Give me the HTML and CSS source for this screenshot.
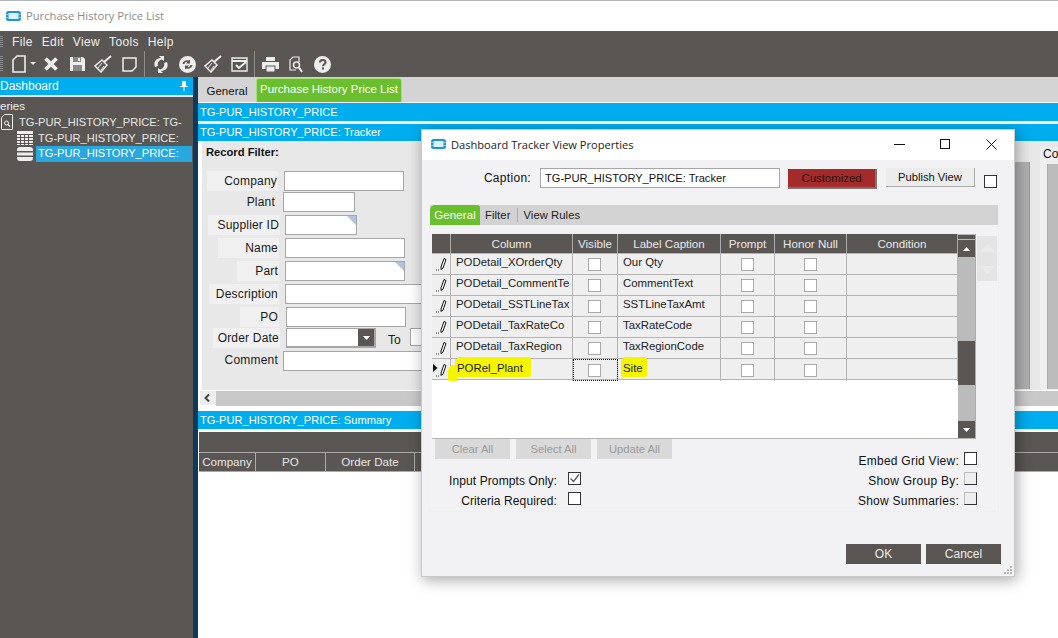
FILE: index.html
```html
<!DOCTYPE html>
<html lang="en">
<head>
<meta charset="utf-8">
<title>Purchase History Price List</title>
<link rel="stylesheet" href="styles.css">
</head>
<body>
<div class="app">
  <header class="titlebar">
    <svg class="appicon" viewBox="0 0 15 12"><rect x="0" y="1" width="15" height="10" rx="2.500" fill="#1d93d2"/><rect x="2.500" y="3" width="10" height="6" fill="#dcf0fa"/><rect x="0" y="4" width="2" height="1" fill="#8fd2f2"/><rect x="0" y="7" width="2" height="1" fill="#8fd2f2"/><rect x="13" y="4" width="2" height="1" fill="#8fd2f2"/><rect x="13" y="7" width="2" height="1" fill="#8fd2f2"/></svg>
    <span class="titlebar-text">Purchase History Price List</span>
  </header>
  <nav class="menubar">
    <span class="grip"></span>
    <span>File</span><span>Edit</span><span>View</span><span>Tools</span><span>Help</span>
  </nav>
  <div class="toolbar">
    <span class="grip grip-tool"></span>
    <span class="newdoc">
      <svg width="14" height="18" viewBox="0 0 14 18"><path d="M5 1H13V17H1V5Z" fill="none" stroke="#eee" stroke-width="1.600"/></svg>
      <svg width="6" height="3" viewBox="0 0 6 3"><path d="M0 0H6L3 3Z" fill="#eee"/></svg>
    </span>
    <span class="slot"><svg width="16" height="16" viewBox="0 0 16 16"><path d="M2.500 2.500L13.500 13.500M13.500 2.500L2.500 13.500" stroke="#eee" stroke-width="3.800"/></svg></span>
    <span class="slot"><svg width="17" height="16" viewBox="0 0 17 16"><path d="M1 1H14L16 3V15H1Z" fill="#eee"/><rect x="4" y="1" width="8" height="5" fill="#8a8886"/><rect x="9" y="2" width="2" height="3" fill="#eee"/><rect x="4" y="9" width="9" height="6" fill="#8a8886"/></svg></span>
    <span class="slot"><svg width="18" height="18" viewBox="0 0 18 18"><path d="M17 1L10 7" stroke="#eee" stroke-width="2"/><path d="M8 5L13 10L7 17L1 11Z" fill="none" stroke="#eee" stroke-width="1.500"/><path d="M4 13L8 8M7 15L10 11" stroke="#eee"/></svg></span>
    <span class="slot"><svg width="15" height="15" viewBox="0 0 15 15"><path d="M1 1H14V10L10 14H1Z" fill="none" stroke="#eee" stroke-width="1.500"/></svg></span>
    <span class="sep sep-a"></span>
    <span class="slot"><svg width="16" height="17" viewBox="0 0 16 17"><path d="M2 11C0 6 3 2 8 2L6 0H11V5L9 3.500C6 4 4 7 5 10Z" fill="#eee"/><path d="M14 6C16 11 13 15 8 15L10 17H5V12L7 13.500C10 13 12 10 11 7Z" fill="#eee"/></svg></span>
    <span class="slot"><svg width="17" height="17" viewBox="0 0 17 17"><circle cx="8.500" cy="8.500" r="8.500" fill="#eee"/><path d="M3.500 8C4 5 7 3.500 10 4.500L11 3.500V7.500H7L8.500 6C7 5.500 6 6.500 5.500 8ZM13.500 9C13 12 10 13.500 7 12.500L6 13.500V9.500H10L8.500 11C10 11.500 11 10.500 11.500 9Z" fill="#595653"/></svg></span>
    <span class="slot"><svg width="18" height="18" viewBox="0 0 18 18"><path d="M17 1L10 7" stroke="#eee" stroke-width="2"/><path d="M8 5L13 10L7 17L1 11Z" fill="none" stroke="#eee" stroke-width="1.500"/><path d="M4 13L8 8M7 15L10 11" stroke="#eee"/></svg></span>
    <span class="slot"><svg width="17" height="15" viewBox="0 0 17 15"><path d="M1 1H16V14H1Z" fill="none" stroke="#eee" stroke-width="1.400"/><path d="M1 4H16" stroke="#eee" stroke-width="2"/><path d="M5 8L8 11L15 5" fill="none" stroke="#eee" stroke-width="2"/></svg></span>
    <span class="sep sep-b"></span>
    <span class="slot"><svg width="17" height="15" viewBox="0 0 17 15"><rect x="4" y="0" width="9" height="4" fill="#eee"/><rect x="0" y="5" width="17" height="7" fill="#eee"/><rect x="4" y="9" width="9" height="6" fill="#eee" stroke="#595653"/></svg></span>
    <span class="slot"><svg width="14" height="17" viewBox="0 0 14 17"><path d="M4 1H10V6M4 1L1 4V14H7" fill="none" stroke="#eee" stroke-width="1.200"/><circle cx="7.500" cy="9" r="3" fill="none" stroke="#eee" stroke-width="1.500"/><path d="M10 11.500L13 16" stroke="#eee" stroke-width="2"/></svg></span>
    <span class="slot"><svg width="17" height="17" viewBox="0 0 17 17"><circle cx="8.500" cy="8.500" r="8.500" fill="#eee"/><path d="M5.800 6.500C6 4.800 7.200 4 8.700 4C10.300 4 11.500 5 11.500 6.400C11.500 8.300 9 8.300 9 10.200" fill="none" stroke="#595653" stroke-width="2"/><rect x="8" y="11.500" width="2" height="2" fill="#595653"/></svg></span>
  </div>
  <main class="workspace">
    <aside class="sidebar">
      <div class="side-head"><span>Dashboard</span>
        <svg width="8" height="10" viewBox="0 0 8 10"><path d="M2 0H6V5H8V6H4.500V10H3.500V6H0V5H2Z" fill="#fff"/></svg>
      </div>
      <div class="tree-root">eries</div>
      <div class="tree-row tree-l1">
        <svg width="12" height="16" viewBox="0 0 12 16"><path d="M3.500 0.500H11.500V15.500H0.500V3.500Z" fill="none" stroke="#eee"/><circle cx="5.500" cy="9" r="2" fill="none" stroke="#eee"/><path d="M7 10.500L9 12.500" stroke="#eee" stroke-width="1.200"/></svg>
        <span>TG-PUR_HISTORY_PRICE: TG-</span>
      </div>
      <div class="tree-row tree-l2">
        <svg width="16" height="14" viewBox="0 0 16 14"><path d="M0 0H16V14H0Z" fill="#eee"/><path d="M0 3.500H16M0 6.500H16M0 9.500H16M0 12.500H16M3.500 3V14M7.500 3V14M11.500 3V14" stroke="#595653" stroke-width="1"/></svg>
        <span>TG-PUR_HISTORY_PRICE:</span>
      </div>
      <div class="tree-row tree-l3">
        <svg width="16" height="14" viewBox="0 0 16 14"><path d="M3 0H13A3 3 0 0 1 16 3V4H0V3A3 3 0 0 1 3 0ZM0 5.500H16V8.500H0ZM0 10H16V11A3 3 0 0 1 13 14H3A3 3 0 0 1 0 11Z" fill="#eee"/></svg>
        <span class="tree-sel">TG-PUR_HISTORY_PRICE:</span>
      </div>
    </aside>
    <div class="splitter"></div>
    <section class="content">
      <div class="tabs">
        <span class="tab">General</span>
        <span class="tab tab-on">Purchase History Price List</span>
      </div>
      <div class="bluebar">TG-PUR_HISTORY_PRICE</div>
      <div class="bluebar bluebar-b">TG-PUR_HISTORY_PRICE: Tracker</div>
      <div class="tracker">
        <div class="filter">
          <div class="filter-title">Record Filter:</div>
          <div class="frow f-company"><label class="shade">Company</label><span class="inp"></span></div>
          <div class="frow f-plant"><label>Plant</label><span class="inp"></span></div>
          <div class="frow f-supplier"><label class="shade">Supplier ID</label><span class="inp corner"></span></div>
          <div class="frow f-name"><label class="shade">Name</label><span class="inp"></span></div>
          <div class="frow f-part"><label class="shade">Part</label><span class="inp corner"></span></div>
          <div class="frow f-desc"><label class="shade">Description</label><span class="inp"></span></div>
          <div class="frow f-po"><label class="shade">PO</label><span class="inp"></span></div>
          <div class="frow f-date"><label class="shade">Order Date</label><span class="inp combo"><i class="combo-btn"><svg width="7" height="4" viewBox="0 0 7 4"><path d="M0 0H7L3.500 4Z" fill="#fff"/></svg></i></span><span class="to">To</span><span class="inp"></span></div>
          <div class="frow f-comment"><label>Comment</label><span class="inp"></span></div>
        </div>
        <div class="far">
          <div class="far-col"></div>
          <div class="far-panel"><span>Co</span><div class="far-inner"></div></div>
        </div>
      </div>
      <div class="hscroll"><svg width="6" height="8" viewBox="0 0 6 8"><path d="M5 0.500L1.500 4L5 7.500" fill="none" stroke="#444" stroke-width="2"/></svg><span class="hscroll-track"></span></div>
      <div class="bluebar bluebar-c">TG-PUR_HISTORY_PRICE: Summary</div>
      <div class="groupbar"></div>
      <div class="sumhead"><span class="c1">Company</span><span class="c2">PO</span><span class="c3">Order Date</span><span class="c4"></span></div>
    </section>
  </main>
</div>

<div class="dialog">
  <div class="dlg-title">
    <svg class="appicon" viewBox="0 0 15 12"><rect x="0" y="1" width="15" height="10" rx="2.500" fill="#1d93d2"/><rect x="2.500" y="3" width="10" height="6" fill="#dcf0fa"/><rect x="0" y="4" width="2" height="1" fill="#8fd2f2"/><rect x="0" y="7" width="2" height="1" fill="#8fd2f2"/><rect x="13" y="4" width="2" height="1" fill="#8fd2f2"/><rect x="13" y="7" width="2" height="1" fill="#8fd2f2"/></svg>
    <span class="dlg-name">Dashboard Tracker View Properties</span>
    <span class="winbtn"><svg width="11" height="11" viewBox="0 0 11 11"><path d="M0 5.500H11" stroke="#111"/></svg></span>
    <span class="winbtn"><svg width="11" height="11" viewBox="0 0 11 11"><rect x="0.500" y="0.500" width="9" height="9" fill="none" stroke="#111"/></svg></span>
    <span class="winbtn"><svg width="11" height="11" viewBox="0 0 11 11"><path d="M0.500 0.500L10.500 10.500M10.500 0.500L0.500 10.500" stroke="#111"/></svg></span>
  </div>
  <div class="dlg-caption">
    <label>Caption:</label>
    <span class="cap-input">TG-PUR_HISTORY_PRICE: Tracker</span>
    <span class="btn-custom">Customized</span>
    <span class="btn-pub">Publish View</span>
    <span class="box box-dark box-pub"></span>
  </div>
  <div class="dlg-group">
    <div class="dtabs"><span class="dtab-on">General</span><span class="dtab">Filter</span><span class="dtab dtab-last">View Rules</span></div>
    <div class="gridwrap">
      <div class="grid">
        <div class="rows">
          <div class="row row-head"><span></span><span>Column</span><span>Visible</span><span>Label Caption</span><span>Prompt</span><span>Honor Null</span><span>Condition</span></div>
          <div class="row"><span class="pen"><svg width="11" height="14" viewBox="0 0 11 14"><path d="M5 10L8 1.500L10 2.500L7 11L5 12.500Z" fill="#fff" stroke="#111"/><path d="M0 13H1M2 13H3" stroke="#333"/></svg></span><span class="txt">PODetail_XOrderQty</span><span class="mid"><i class="box"></i></span><span class="txt">Our Qty</span><span class="mid"><i class="box"></i></span><span class="mid"><i class="box"></i></span><span></span></div>
          <div class="row"><span class="pen"><svg width="11" height="14" viewBox="0 0 11 14"><path d="M5 10L8 1.500L10 2.500L7 11L5 12.500Z" fill="#fff" stroke="#111"/><path d="M0 13H1M2 13H3" stroke="#333"/></svg></span><span class="txt">PODetail_CommentTe</span><span class="mid"><i class="box"></i></span><span class="txt">CommentText</span><span class="mid"><i class="box"></i></span><span class="mid"><i class="box"></i></span><span></span></div>
          <div class="row"><span class="pen"><svg width="11" height="14" viewBox="0 0 11 14"><path d="M5 10L8 1.500L10 2.500L7 11L5 12.500Z" fill="#fff" stroke="#111"/><path d="M0 13H1M2 13H3" stroke="#333"/></svg></span><span class="txt">PODetail_SSTLineTax</span><span class="mid"><i class="box"></i></span><span class="txt">SSTLineTaxAmt</span><span class="mid"><i class="box"></i></span><span class="mid"><i class="box"></i></span><span></span></div>
          <div class="row"><span class="pen"><svg width="11" height="14" viewBox="0 0 11 14"><path d="M5 10L8 1.500L10 2.500L7 11L5 12.500Z" fill="#fff" stroke="#111"/><path d="M0 13H1M2 13H3" stroke="#333"/></svg></span><span class="txt">PODetail_TaxRateCo</span><span class="mid"><i class="box"></i></span><span class="txt">TaxRateCode</span><span class="mid"><i class="box"></i></span><span class="mid"><i class="box"></i></span><span></span></div>
          <div class="row"><span class="pen"><svg width="11" height="14" viewBox="0 0 11 14"><path d="M5 10L8 1.500L10 2.500L7 11L5 12.500Z" fill="#fff" stroke="#111"/><path d="M0 13H1M2 13H3" stroke="#333"/></svg></span><span class="txt">PODetail_TaxRegion</span><span class="mid"><i class="box"></i></span><span class="txt">TaxRegionCode</span><span class="mid"><i class="box"></i></span><span class="mid"><i class="box"></i></span><span></span></div>
          <div class="row"><span class="pen pen-last"><svg width="15" height="14" viewBox="0 0 15 14"><path d="M0 1L4.500 5L0 9Z" fill="#111"/><path d="M8 10L11 1.500L13 2.500L10 11L8 12.500Z" fill="#fff" stroke="#111"/><path d="M3 13H4M5 13H6" stroke="#333"/></svg></span><span class="txt"><b class="mark mark-a">PORel_Plant</b></span><span class="mid focus"><i class="box"></i></span><span class="txt"><b class="mark">Site</b></span><span class="mid"><i class="box"></i></span><span class="mid"><i class="box"></i></span><span></span></div>
        </div>
        <div class="vscroll">
          <span class="vs-cap"></span>
          <span class="vs-btn"><svg width="7" height="4" viewBox="0 0 7 4"><path d="M0 4H7L3.500 0Z" fill="#fff"/></svg></span>
          <span class="vs-thumb"></span>
          <span class="vs-btn"><svg width="7" height="4" viewBox="0 0 7 4"><path d="M0 0H7L3.500 4Z" fill="#fff"/></svg></span>
        </div>
      </div>
      <div class="updown">
        <svg width="15" height="8" viewBox="0 0 15 8"><path d="M0 8H15L7.500 0Z" fill="#eaeaea"/></svg>
        <svg width="15" height="8" viewBox="0 0 15 8"><path d="M0 0H15L7.500 8Z" fill="#eaeaea"/></svg>
      </div>
    </div>
    <div class="lower">
      <div class="lower-left">
        <div class="bulk"><span>Clear All</span><span>Select All</span><span>Update All</span></div>
        <div class="opts">
          <div class="opt"><label>Input Prompts Only:</label><span class="box box-dark"><svg width="11" height="11" viewBox="0 0 11 11"><path d="M1.500 5.500L4.500 8.500L10 1.500" fill="none" stroke="#555" stroke-width="1.300"/></svg></span></div>
          <div class="opt"><label>Criteria Required:</label><span class="box box-dark"></span></div>
        </div>
      </div>
      <div class="opts opts-r">
        <div class="opt"><label>Embed Grid View:</label><span class="box box-dark"></span></div>
        <div class="opt"><label>Show Group By:</label><span class="box box-off"></span></div>
        <div class="opt"><label>Show Summaries:</label><span class="box box-off"></span></div>
      </div>
    </div>
  </div>
  <div class="dlg-foot"><span>OK</span><span>Cancel</span></div>
  <svg class="sizegrip" width="9" height="9" viewBox="0 0 9 9"><path d="M6 0H8V2H6ZM3 3H5V5H3ZM6 3H8V5H6ZM0 6H2V8H0ZM3 6H5V8H3ZM6 6H8V8H6Z" fill="#bbb"/></svg>
</div>
</body>
</html>
```

FILE: styles.css
```css
* { box-sizing: border-box; }
html, body { margin: 0; height: 100%; overflow: hidden; }
body { background: #fff; font: 12px "Liberation Sans", Arial, sans-serif; color: #111; position: relative; }
.app { width: 1058px; height: 638px; display: flex; flex-direction: column; }

.titlebar { height: 31px; flex: none; border-top: 1px solid #b5b5b5; background: #fff; display: flex; align-items: center; padding: 0 0 1px 6px; }
.appicon { width: 15px; height: 12px; flex: none; }
.titlebar-text { margin-left: 5px; font-family: "Open Sans", sans-serif; font-size: 11.2px; color: #8a8a8a; }

.menubar { height: 20px; flex: none; background: #595653; color: #f0f0f0; display: flex; align-items: center; gap: 9px; padding-top: 2px; letter-spacing: .35px; }
.menubar .grip { height: 12px; }
.grip { width: 3px; background: repeating-linear-gradient(#8a8a8a 0 1px, #595653 1px 2px); flex: none; }
.toolbar { height: 26px; flex: none; background: #595653; display: flex; align-items: center; }
.grip-tool { height: 16px; margin-right: 9px; }
.newdoc { width: 26px; display: flex; align-items: center; gap: 4px; }
.newdoc svg:last-child { margin-bottom: 2px; }
.slot { width: 26px; height: 26px; display: flex; align-items: center; justify-content: center; flex: none; }
.slot svg, .newdoc svg { display: block; }
.sep { width: 1px; height: 26px; background: #8f8d8a; flex: none; }
.sep-a { margin: 0 3px 0 2px; }
.sep-b { margin: 0 2px 0 2px; }

.workspace { flex: 1; display: flex; min-height: 0; }
.sidebar { width: 193px; flex: none; background: #595653; color: #eee; overflow: hidden; }
.side-head { height: 18px; background: #00adee; color: #fff; display: flex; align-items: center; justify-content: space-between; padding: 0 5px 0 0; box-shadow: 0 2px 0 #e8e8e8; }
.tree-root { margin-top: 3px; padding-top: 2px; height: 16px; color: #eee; font-size: 11.5px; }
.tree-row { height: 16px; display: flex; align-items: center; white-space: nowrap; color: #e8e8e8; font-size: 11.1px; }
.tree-row svg { flex: none; display: block; }
.tree-l1 { padding-left: 1px; gap: 6px; }
.tree-l2 { padding-left: 17px; gap: 5px; }
.tree-l3 { padding-left: 17px; padding-right: 1px; gap: 3px; }
.tree-sel { background: #29a7df; flex: 1; height: 16px; line-height: 15px; padding-left: 2px; color: #fff; }

.splitter { width: 5px; flex: none; background: #0d3a5a; }
.content { flex: 1; min-width: 0; display: flex; flex-direction: column; background: #fff; }
.tabs { height: 26px; flex: none; background: #d4d4d4; display: flex; padding-top: 1px; border-bottom: 1px solid #fff; }
.tab { width: 58px; text-align: center; line-height: 26px; color: #111; font-size: 11.5px; }
.tab-on { width: 146px; height: 24px; line-height: 21px; background: #6abf2e; color: #fff; border: 1px solid #a8dc7e; border-bottom: 0; border-radius: 3px 3px 0 0; white-space: nowrap; font-size: 11.5px; }
.bluebar { height: 18px; line-height: 18px; flex: none; background: #00adee; color: #fff; padding-left: 2px; font-size: 11.1px; }
.bluebar-b { margin-top: 3px; height: 17px; line-height: 16px; }
.bluebar-c { margin-top: 6px; }
.tracker { height: 249px; flex: none; display: flex; background: #fff; }
.filter { width: 813px; margin-left: 4px; background: #e8e8e8; padding-top: 5px; flex: none; }
.filter-title { font-weight: bold; height: 19px; color: #111; padding-left: 4px; font-size: 11.2px; }
.frow { display: flex; align-items: stretch; white-space: nowrap; height: 20px; color: #1a1a1a; }
.frow label { text-align: right; line-height: 21px; height: 20px; padding-right: 1px; flex: none; letter-spacing: .2px; }
.shade { background: #f0f0f0; }
.inp { display: block; flex: none; position: relative; height: 20px; background: #fff; border: 1px solid #a6a6a6; }
.corner::after { content: ""; position: absolute; right: 0; top: 0; border-style: solid; border-width: 0 9px 9px 0; border-color: transparent #b0c4de transparent transparent; }
.f-company { margin-top: 6px; }
.f-company label { width: 71px; margin-left: 5px; margin-right: 6px; }
.f-company .inp { width: 120px; }
.f-plant { margin-top: 1px; }
.f-plant label { width: 73px; margin-left: 3px; margin-right: 5px; padding-right: 3px; }
.f-plant .inp { width: 72px; }
.f-supplier { margin-top: 3px; }
.f-supplier label { width: 72px; margin-left: 6px; margin-right: 5px; }
.f-supplier .inp { width: 72px; }
.f-name { margin-top: 3px; }
.f-name label { width: 61px; margin-left: 16px; margin-right: 6px; }
.f-name .inp { width: 120px; }
.f-part { margin-top: 3px; }
.f-part label { width: 42px; margin-left: 35px; margin-right: 6px; }
.f-part .inp { width: 120px; }
.f-desc { margin-top: 3px; }
.f-desc label { width: 70px; margin-left: 7px; margin-right: 6px; }
.f-desc .inp { width: 200px; }
.f-po { margin-top: 3px; }
.f-po label { width: 39px; margin-left: 38px; margin-right: 7px; }
.f-po .inp { width: 120px; }
.f-date { margin-top: 1px; }
.f-date label { width: 67px; margin-left: 11px; margin-right: 6px; }
.f-date .combo { width: 90px; border-width: 1px 2px 2px 1px; }
.combo-btn { position: absolute; right: 0; top: 0; bottom: 0; width: 16px; background: #595653; display: flex; align-items: center; justify-content: center; }
.to { margin: 5px 9px 0 12px; color: #1a1a1a; }
.f-date .inp:last-child { width: 80px; height: 18px; }
.f-comment { margin-top: 3px; }
.f-comment label { width: 73px; margin-left: 3px; margin-right: 5px; padding-right: 0; line-height: 18px; }
.f-comment .inp { width: 200px; }
.far { flex: 1; min-width: 0; display: flex; background: #e8e8e8; }
.far-col { width: 15px; background: #b0b0b0; margin: 21px 0 1px; flex: none; border-right: 1px solid #999; }
.far-panel { flex: 1; margin-left: 10px; margin-top: 6px; background: #eee; padding-left: 3px; overflow: hidden; }
.far-panel span { display: block; height: 17px; line-height: 14px; }
.far-inner { margin-left: 4px; height: 225px; background: #bcbcbc; border-left: 1px solid #aaa; }
.hscroll { height: 15px; flex: none; background: #eee; display: flex; align-items: center; padding-left: 4px; border-top: 1px solid #fff; margin-left: 2px; }
.hscroll-track { flex: 1; height: 15px; background: #c8c8c8; margin-left: 6px; }
.groupbar { height: 20px; flex: none; margin-top: 3px; background: #595653; margin-left: 1px; }
.sumhead { height: 20px; flex: none; display: flex; background: #595653; color: #e8e8e8; margin-left: 1px; border-top: 1px solid #aaa; border-bottom: 1px solid #aaa; line-height: 18px; text-align: center; font-size: 11.6px; }
.sumhead span { border-right: 1px solid #aaa; flex: none; }
.c1 { width: 57px; }
.c2 { width: 70px; }
.c3 { width: 89px; }
.c4 { flex: 1 !important; border-right: 0 !important; }

.dialog { position: absolute; left: 421px; top: 129px; width: 594px; height: 448px; background: #f2f2f5; border: 1px solid #c8c8c8; box-shadow: 2px 3px 14px rgba(0,0,0,.35); color: #111; }
.dlg-title { height: 30px; background: #fff; display: flex; align-items: center; padding: 0 0 2px 9px; }
.dlg-name { margin-left: 5px; font-family: "Open Sans", sans-serif; font-size: 11.1px; flex: 1; color: #222; }
.winbtn { width: 46px; display: flex; justify-content: center; }
.winbtn svg { display: block; }
.dlg-caption { height: 45px; display: flex; padding-top: 8px; }
.dlg-caption label { width: 109px; margin-right: 9px; text-align: right; line-height: 21px; flex: none; letter-spacing: .3px; }
.cap-input { width: 240px; height: 20px; background: #fff; border: 1px solid #a6a6a6; line-height: 18px; padding-left: 4px; flex: none; font-size: 11.1px; }
.btn-custom { width: 89px; height: 20px; margin: 1px 0 0 8px; background: #a52a2a; color: #2a1010; border-right: 2px solid #777; border-bottom: 2px solid #777; text-align: center; line-height: 18px; flex: none; font-size: 11.4px; }
.btn-pub { width: 89px; height: 19px; margin-left: 9px; background: #ececec; border-right: 1px solid #aaa; border-bottom: 1px solid #aaa; text-align: center; line-height: 18px; flex: none; font-size: 11.2px; }
.box { width: 13px; height: 13px; display: block; background: #fff; border: 1px solid #aaa; flex: none; }
.box-dark { border-color: #333; }
.box-off { background: #eee; border-color: #bbb #333 #333 #bbb; }
.box-pub { margin: 7px 0 0 9px; }
.box svg { display: block; }
.dlg-group { margin-left: 8px; width: 568px; height: 306px; outline: 1px solid #efeff0; }
.dtabs { height: 20px; background: #d2d2d2; display: flex; align-items: center; font-size: 11.2px; letter-spacing: .1px; }
.dtab-on { width: 50px; height: 20px; line-height: 20px; text-align: center; background: #6abf2e; color: #fff; border-radius: 5px 3px 0 0; font-size: 11.5px; }
.dtab { padding: 0 7px 0 5px; line-height: 14px; color: #222; }
.dtab:nth-child(2) { padding-left: 5px; }
.dtab-last { border-left: 1px solid #aaa; padding-left: 5px; }
.gridwrap { display: flex; margin-top: 9px; }
.grid { width: 544px; margin-left: 2px; height: 205px; display: flex; background: #fff; border-bottom: 1px solid #b4b4b4; flex: none; }
.rows { width: 526px; flex: none; }
.row { display: grid; grid-template-columns: 19px 122px 45px 103px 54px 72px 111px; height: 21px; background: #efefef; border-bottom: 1px solid #b4b4b4; font-size: 11.4px; }
.row span { border-right: 1px solid #b4b4b4; min-width: 0; white-space: nowrap; overflow: hidden; }
.row-head { height: 20px; background: #595653; color: #e8e8e8; text-align: center; line-height: 19px; font-size: 11.6px; }
.row-head span { border-color: #aaa; }
.pen { display: flex; align-items: center; justify-content: flex-end; padding-right: 3px; }
.pen-last { padding-right: 2px; }
.pen svg { display: block; flex: none; }
.txt { padding: 0 0 4px 5px; line-height: 16px; color: #222; }
.mid { display: flex; align-items: center; justify-content: center; padding: 1px 1px 0 0; }
.focus { outline: 1px dotted #111; outline-offset: -1px; }
.mark { font-weight: normal; background: #f5f500; padding: 2px 4px 2px 0; position: relative; display: inline-block; line-height: 14px; border-radius: 2px; box-shadow: 0 -2px 0 #f5f500, -2px 0 0 #f5f500; }
.row .txt:has(.mark) { overflow: visible; }
.mark-a { padding-right: 8px; margin-left: 1px; }
.mark-a::before { content: ""; position: absolute; left: -9px; top: 6px; width: 9px; height: 16px; background: #f5f500; border-radius: 6px 0 0 2px; }
.vscroll { width: 18px; flex: none; background: #bbb; display: flex; flex-direction: column; border-right: 1px solid #aaa; }
.vs-cap { height: 4px; background: #595653; margin-top: 1px; }
.vs-btn { height: 17px; margin-top: 1px; background: #595653; display: flex; align-items: center; justify-content: center; }
.vs-thumb { height: 44px; margin-top: 84px; margin-bottom: 35px; background: #595653; }
.updown { width: 20px; height: 45px; margin: 2px 0 0 1px; background: #e4e4e4; display: flex; flex-direction: column; align-items: center; justify-content: center; gap: 14px; flex: none; }
.updown svg { display: block; }
.lower { display: flex; justify-content: space-between; padding-right: 21px; }
.lower-left { padding-left: 5px; }
.bulk { display: flex; gap: 6px; }
.bulk span { width: 75px; height: 20px; line-height: 20px; text-align: center; background: #d9d9d9; color: #9a9a9a; font-size: 11.2px; }
.opts { margin-top: 13px; }
.opt { height: 20px; display: flex; justify-content: flex-end; align-items: flex-start; gap: 11px; }
.opt label { line-height: 17px; padding-top: 1px; letter-spacing: .1px; }
.lower-left .opt { width: 146px; }
.opts-r label { letter-spacing: .25px; }
.opts-r .opt { gap: 5px; }
.dlg-foot { position: absolute; right: 13px; bottom: 12px; display: flex; gap: 5px; }
.dlg-foot span { width: 75px; height: 20px; line-height: 20px; text-align: center; background: #595653; color: #eee; }
.sizegrip { position: absolute; right: 1px; bottom: 1px; }
```
